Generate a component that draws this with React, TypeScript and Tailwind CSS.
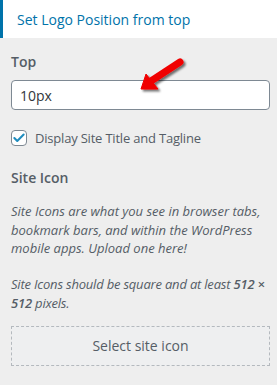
import { Check } from 'lucide-react';

function RedArrow() {
  return (
    <svg className="absolute left-0 top-0 pointer-events-none" width="277" height="385" viewBox="0 0 277 385">
      <defs>
        <filter id="arrowShadow" x="-20%" y="-20%" width="160%" height="160%">
          <feDropShadow dx="2" dy="2" stdDeviation="1.2" floodColor="#000" floodOpacity="0.55" />
        </filter>
      </defs>
      <g filter="url(#arrowShadow)" fill="#f00000" stroke="#f00000">
        <line x1="180" y1="62" x2="151" y2="81" strokeWidth="7" strokeLinecap="round" />
        <polygon points="141,89 146,74 158,89" strokeWidth="1" strokeLinejoin="round" />
      </g>
    </svg>
  );
}

export default function App() {
  return (
    <div className="relative w-[277px] h-[385px] overflow-hidden bg-[#eeeeee] font-['Open_Sans',sans-serif] text-[#555d66]">
      <div className="h-[38px] bg-white border-l-[3px] border-[#0073aa] pl-[14px] flex items-center">
        <h3 className="text-[14px] text-[#0073aa]">Set Logo Position from top</h3>
      </div>

      <div className="pl-[11px] pr-[7px]">
        <label className="block mt-[14px] text-[14px] leading-[20px] font-semibold text-[#555d66]">Top</label>
        <input
          type="text"
          defaultValue="10px"
          className="mt-[8px] w-full h-[30px] px-[8px] rounded-[4px] border border-[#7e8993] bg-white text-[14px] text-[#32373c] outline-none"
        />

        <label className="mt-[20px] flex items-center gap-[8px] text-[13px] leading-[16px] tracking-[-0.2px]">
          <span className="w-[16px] h-[16px] rounded-[4px] border border-[#7e8993] bg-white flex items-center justify-center">
            <Check className="w-[14px] h-[14px] text-[#1e8cbe]" strokeWidth={3.5} />
          </span>
          Display Site Title and Tagline
        </label>

        <h4 className="mt-[22px] text-[14px] leading-[20px] font-semibold">Site Icon</h4>
        <p className="mt-[14px] text-[13px] leading-[18.5px] italic">
          Site Icons are what you see in browser tabs, bookmark bars, and within the WordPress mobile apps. Upload one here!
        </p>
        <p className="mt-[17px] text-[13px] leading-[19px] italic tracking-[-0.2px]">
          Site Icons should be square and at least <strong className="font-semibold">512&nbsp;×</strong>{' '}
          <strong className="font-semibold">512</strong> pixels.
        </p>

        <button className="mt-[13px] w-full h-[40px] border border-dashed border-[#b4b9be] bg-[#eeeff0] text-[14px] text-[#555d66]">
          Select site icon
        </button>
      </div>

      <RedArrow />
    </div>
  );
}
